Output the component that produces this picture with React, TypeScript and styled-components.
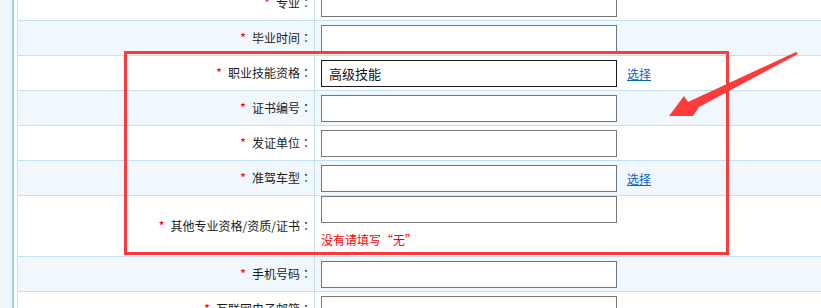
import React from 'react';
import styled, {createGlobalStyle} from 'styled-components';

const GlobalStyle = createGlobalStyle`
    html, body {
        margin: 0;
        padding: 0;
        background: #fff;
        overflow: hidden;
    }
    body {
        font-family: "Noto Sans CJK SC", "Liberation Sans", sans-serif;
        font-size: 12px;
        color: #1a1a1a;
    }
`;

const Page = styled.div`
    position: relative;
    display: flex;
    width: 821px;
    height: 308px;
    overflow: hidden;
`;

const SideStrip = styled.div`
    width: 12px;
    flex: none;
    background: #eef6fb;
    border-right: 2px solid #a3d1ea;
`;

const Table = styled.div`
    flex: 1;
    margin-left: 3px;
    border-left: 1px solid #c4e1f4;
`;

const Rows = styled.div`
    margin-top: -14px;
`;

interface RowProps {
    $alt?: boolean;
    $tall?: boolean;
}

const Row = styled.div<RowProps>`
    box-sizing: border-box;
    display: grid;
    grid-template-columns: 297px 1fr;
    height: ${(p) => (p.$tall ? '61px' : '35px')};
    background: ${(p) => (p.$alt ? '#f0f8fe' : '#fff')};
    border-bottom: 1px solid #c4e1f4;
`;

const LabelCell = styled.div`
    box-sizing: border-box;
    display: flex;
    align-items: center;
    justify-content: flex-end;
    padding-right: 2px;
    border-right: 1px solid #c4e1f4;
    white-space: nowrap;
    line-height: 16px;
`;

const Star = styled.span`
    color: #f00;
    font-size: 13px;
    margin-right: 6px;
`;

// the full-width colon sits centred in its box in the original page
const Colon = styled.span`
    font-family: "Noto Sans CJK TC", "Noto Sans CJK SC", sans-serif;
`;

const ValueCell = styled.div<{$stack?: boolean}>`
    display: flex;
    flex-direction: ${(p) => (p.$stack ? 'column' : 'row')};
    align-items: ${(p) => (p.$stack ? 'flex-start' : 'center')};
    padding-left: 6px;
    gap: 10px;
`;

const TextInput = styled.input<{$active?: boolean}>`
    box-sizing: border-box;
    width: 296px;
    height: 27px;
    margin: 0;
    padding: 0 7px;
    border: 1px solid ${(p) => (p.$active ? '#1b1b1b' : '#767676')};
    border-radius: 0;
    background: #fff;
    font-family: "Noto Sans CJK SC", "Liberation Sans", sans-serif;
    font-size: 13px;
    color: #111;
    outline: none;
`;

const PickLink = styled.a`
    color: #0a62c9;
    text-decoration: underline;
    font-size: 12px;
    cursor: pointer;
`;

const Hint = styled.div`
    color: #f00;
    font-size: 12px;
    line-height: 16px;
    margin-top: -1px;
`;

const Highlight = styled.div`
    position: absolute;
    left: 124px;
    top: 51px;
    width: 605px;
    height: 204px;
    box-sizing: border-box;
    border: 3px solid #fd3b3b;
    pointer-events: none;
`;

const ArrowLayer = styled.svg`
    position: absolute;
    left: 0;
    top: 0;
    pointer-events: none;
`;

type Field = {
    label: string;
    value?: string;
    active?: boolean;
    pick?: boolean;
    hint?: string;
};

const fields: Field[] = [
    {label: '专业'},
    {label: '毕业时间'},
    {label: '职业技能资格', value: '高级技能', active: true, pick: true},
    {label: '证书编号'},
    {label: '发证单位'},
    {label: '准驾车型', pick: true},
    {label: '其他专业资格/资质/证书', hint: '没有请填写“无”'},
    {label: '手机号码'},
    {label: '互联网电子邮箱'}
];

export default function App() {
    return (
        <>
            <GlobalStyle />
            <Page>
                <SideStrip />
                <Table>
                    <Rows>
                        {fields.map((f, i) => (
                            <Row key={f.label} $alt={i % 2 === 1} $tall={!!f.hint}>
                                <LabelCell>
                                    <Star>*</Star>
                                    {f.label}
                                    <Colon>：</Colon>
                                </LabelCell>
                                <ValueCell $stack={!!f.hint}>
                                    <TextInput type="text" defaultValue={f.value} $active={f.active} />
                                    {f.pick && <PickLink>选择</PickLink>}
                                    {f.hint && <Hint>{f.hint}</Hint>}
                                </ValueCell>
                            </Row>
                        ))}
                    </Rows>
                </Table>
                <Highlight />
                <ArrowLayer width="821" height="308" viewBox="0 0 821 308">
                    <polygon
                        points="669,116 684,96 688,102 796,52 798,54 699,107 693,116"
                        fill="#fd3b3b"
                    />
                </ArrowLayer>
            </Page>
        </>
    );
}
